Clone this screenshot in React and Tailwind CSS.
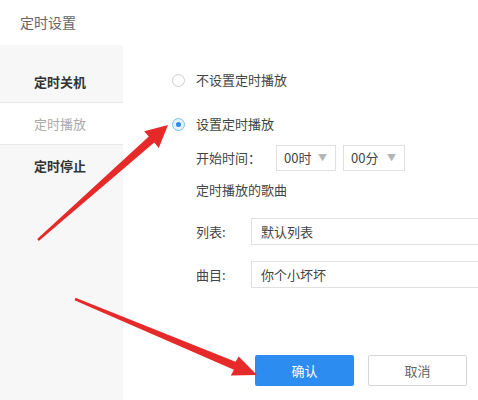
import React, { useState } from "react";

const font = { fontFamily: '"Noto Sans CJK SC", "Noto Sans", sans-serif' };

const Radio = ({ checked, onClick }) => (
  <button
    type="button"
    onClick={onClick}
    className={
      "w-[13px] h-[13px] rounded-full border flex items-center justify-center " +
      (checked ? "border-[#7cc0f0] bg-[#e3f2fd]" : "border-[#cfcfcf] bg-white")
    }
  >
    {checked && <span className="w-[5px] h-[5px] rounded-full bg-[#2d8cf0]" />}
  </button>
);

const Select = ({ value, width }) => (
  <div
    className={
      "h-[26px] border border-[#e0e0e0] bg-white flex items-center justify-between pl-[7px] pr-[8px] text-[13px] text-[#444] " +
      width
    }
  >
    <span>{value}</span>
    <span className="text-[9px] text-[#b5b5b5]">▼</span>
  </div>
);

const Arrows = () => (
  <svg
    className="absolute inset-0 pointer-events-none"
    width="478"
    height="400"
    viewBox="0 0 478 400"
  >
    <polygon
      fill="#e62a2a"
      points="37.2,239.1 148.8,136.6 144.2,131.3 168,125 158.8,147.9 154.2,142.6 38.8,240.9"
    />
    <polygon
      fill="#e62a2a"
      points="75.5,297.8 235.6,361.8 238.7,356.6 257,375 230.8,375.6 233.9,369.8 74.5,300.2"
    />
  </svg>
);

export default function App() {
  const [mode, setMode] = useState(1);

  return (
    <div className="relative w-[478px] h-[400px] bg-white overflow-hidden" style={font}>
      <div className="h-[45px] flex items-center pl-[20px] text-[14px] text-[#666]">
        定时设置
      </div>

      <div className="flex h-[355px]">
        {/* sidebar */}
        <div className="w-[123px] bg-[#f7f7f7] pt-[16px] shrink-0">
          <div className="h-[42px] flex items-center pl-[34px] text-[13px] font-bold text-[#333] border-b border-[#e8e8e8]">
            定时关机
          </div>
          <div className="h-[42px] flex items-center pl-[34px] text-[13px] text-[#aaa] bg-white border-b border-[#e8e8e8]">
            定时播放
          </div>
          <div className="h-[42px] flex items-center pl-[34px] text-[13px] font-bold text-[#333]">
            定时停止
          </div>
        </div>

        {/* content */}
        <div className="flex-1 pl-[49px] text-[13px] text-[#444]">
          <div className="mt-[25px] h-[20px] flex items-center gap-[11px]">
            <Radio checked={mode === 0} onClick={() => setMode(0)} />
            <span>不设置定时播放</span>
          </div>
          <div className="mt-[24px] h-[20px] flex items-center gap-[11px]">
            <Radio checked={mode === 1} onClick={() => setMode(1)} />
            <span>设置定时播放</span>
          </div>

          <div className="pl-[24px]">
            <div className="mt-[11px] flex items-center">
              <span className="w-[80px]">开始时间：</span>
              <div className="flex gap-[7px]">
                <Select value="00时" width="w-[60px]" />
                <Select value="00分" width="w-[62px]" />
              </div>
            </div>

            <div className="mt-[10px] h-[18px] flex items-center">定时播放的歌曲</div>

            <div className="mt-[19px] flex items-center">
              <span className="w-[55px]">列表:</span>
              <div className="w-[240px] h-[27px] border border-[#e0e0e0] flex items-center pl-[9px]">
                默认列表
              </div>
            </div>
            <div className="mt-[16px] flex items-center">
              <span className="w-[55px]">曲目:</span>
              <div className="w-[240px] h-[27px] border border-[#e0e0e0] flex items-center pl-[9px]">
                你个小坏坏
              </div>
            </div>

            <div className="mt-[67px] flex gap-[14px] pl-[59px]">
              <button className="w-[99px] h-[31px] rounded-[2px] bg-[#2d8cf0] text-white text-[13px]">
                确认
              </button>
              <button className="w-[99px] h-[31px] rounded-[2px] border border-[#d6d6d6] bg-white text-[#666] text-[13px]">
                取消
              </button>
            </div>
          </div>
        </div>
      </div>

      <Arrows />
    </div>
  );
}
